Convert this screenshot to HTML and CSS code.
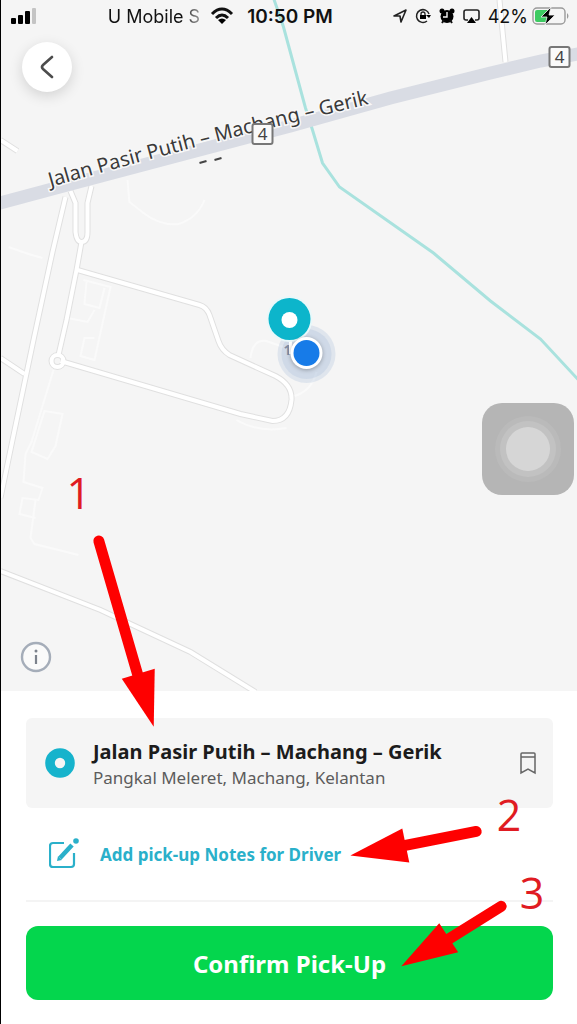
FILE: index.html
```html
<!DOCTYPE html>
<html lang="en">
<head>
  <meta charset="UTF-8" />
  <meta name="viewport" content="width=device-width, initial-scale=1.0"/>
  <title>Confirm Pick-Up</title>
  <link rel="stylesheet" href="styles.css">
</head>
<body>
  <div class="app">
    <main class="map">
      <svg class="map-canvas" viewBox="0 0 577 691" preserveAspectRatio="xMidYMid slice" aria-hidden="true">
        <!-- footpaths and building outlines -->
        <g class="faint">
          <path d="M127 180 L129 202 L143 213 Q160 226 178 224 Q197 218 204 200"/>
          <path d="M8 247 L28 254 L42 258"/>
          <path d="M53 370 L31 442 L25 454 L23 482 L42 488 L38 500 L22 498 L19 514 L35 518"/>
          <path d="M44 411 L62 414 L55 446 L47 459 L31 452 Z"/>
          <path d="M35 500 L30 538 L34 544 L78 555"/>
          <path d="M83 280 L110 287 L94 360 L80 356 L84 338 L94 338"/>
          <path d="M86 282 L84 304 L99 308 L104 288 M67 318 L87 322 L94 310"/>
          <path d="M250 358 Q252 339 266 341 L291 350 M236 420 Q258 433 286 428 M294 396 Q311 391 316 372"/>
        </g>

        <!-- small roads: grey casing first, white fill on top -->
        <g class="casing">
          <path d="M65 197 L52 252 L33 340 L12 440 L0 498"/>
          <path d="M70 191 L75 203 L75 232 Q76 242 81 242 Q87 242 87 232 L87 203 L91 186"/>
          <path d="M81 242 L76 270 L66 320 L58 355"/>
          <path d="M77 270 L199 305 Q206 307 209 315 L218 341 Q221 350 229 355 L275 376 Q292 385 291 400 Q289 421 272 421 L240 414 L60 361"/>
          <path d="M0 358 L24 374 M0 140 L17 151 M499 0 L505 62"/>
          <path d="M0 571 L100 610 L190 652 L255 692"/>
          <circle cx="57" cy="361" r="6"/>
        </g>
        <g class="lane">
          <path d="M65 197 L52 252 L33 340 L12 440 L0 498"/>
          <path d="M70 191 L75 203 L75 232 Q76 242 81 242 Q87 242 87 232 L87 203 L91 186"/>
          <path d="M81 242 L76 270 L66 320 L58 355"/>
          <path d="M77 270 L199 305 Q206 307 209 315 L218 341 Q221 350 229 355 L275 376 Q292 385 291 400 Q289 421 272 421 L240 414 L60 361"/>
          <path d="M0 358 L24 374 M0 140 L17 151 M499 0 L505 62"/>
          <path d="M0 571 L100 610 L190 652 L255 692"/>
          <circle cx="57" cy="361" r="6"/>
        </g>

        <!-- river -->
        <path class="river" d="M273 -2 L283 27 L305 108 L312 130 L322 163 L339 187 L433 253 L490 301 L540 339 L578 380"/>

        <!-- highway -->
        <path class="highway" d="M-4 204 L63 186 L180 155 L290 126 L390 98 L490 73 L540 61 L582 53"/>
        <path id="roadLine" d="M50 187 Q210 141 390 99" fill="none"/>
        <text class="road-name"><textPath href="#roadLine">Jalan Pasir Putih – Machang – Gerik</textPath></text>
        <path class="dash" d="M199 163 L206 161 M214 160 L221 158"/>
        <g class="shield">
          <rect x="252" y="124" width="20" height="20" rx="2"/>
          <text x="262" y="140">4</text>
          <rect x="549" y="47" width="20" height="20" rx="2"/>
          <text x="559" y="63">4</text>
        </g>

        <!-- pick-up pin and current location -->
        <circle class="accuracy" cx="306" cy="354" r="29"/>
        <circle class="accuracy" cx="306" cy="354" r="25"/>
        <text class="pin-label" x="283" y="355">1</text>
        <path d="M290 340 V354" stroke="#ffffff" stroke-width="3"/>
        <circle cx="289" cy="319" r="23" fill="#e9f8fa"/>
        <circle cx="289" cy="319" r="21" fill="#0cb5cb"/>
        <circle cx="289" cy="320" r="8" fill="#ffffff"/>
        <circle class="me" cx="306" cy="353" r="16"/>
        <circle cx="306" cy="353" r="13" fill="#177be8"/>
      </svg>

      <header class="status-bar">
        <div class="status-left">
          <svg width="26" height="16" viewBox="0 0 26 16" aria-hidden="true">
            <rect x="0" y="10" width="5" height="6" rx="1"/>
            <rect x="7" y="7" width="5" height="9" rx="1"/>
            <rect x="14" y="3" width="5" height="13" rx="1"/>
            <rect x="21" y="0" width="4" height="16" rx="1" fill="#c4c4c4"/>
          </svg>
          <span class="carrier">U Mobile S</span>
          <svg width="24" height="18" viewBox="0 0 24 18" aria-hidden="true">
            <g fill="none" stroke="#111111" stroke-width="3">
              <path d="M2 7 Q12 -3 22 7"/>
              <path d="M6 11 Q12 5 18 11"/>
            </g>
            <path d="M8 13 Q12 10 16 13 L12 17 Z"/>
          </svg>
        </div>
        <span class="time">10:50 PM</span>
        <div class="status-right">
          <svg width="14" height="14" viewBox="0 0 14 14" aria-hidden="true">
            <path d="M1 7 L13 1 L8 13 L7 7 Z" fill="none" stroke="#222222" stroke-width="1.6" stroke-linejoin="round"/>
          </svg>
          <svg width="16" height="16" viewBox="0 0 16 16" aria-hidden="true">
            <path d="M14 6 A6.4 6.4 0 1 0 12 13" fill="none" stroke="#222222" stroke-width="1.5"/>
            <path d="M11 7 H16 L14 10 Z"/>
            <rect x="5" y="7" width="6" height="4"/>
            <path d="M6 7 V6 A2 2 0 0 1 10 6 V7" fill="none" stroke="#222222" stroke-width="1.3"/>
          </svg>
          <svg width="16" height="16" viewBox="0 0 16 16" aria-hidden="true">
            <circle cx="8" cy="8.500" r="6.500"/>
            <circle cx="3" cy="3" r="2.500"/>
            <circle cx="13" cy="3" r="2.500"/>
            <path d="M3 15 L5 12 M13 15 L11 12" stroke="#111111" stroke-width="2"/>
            <path d="M8 4 V9 H4" fill="none" stroke="#f5f5f5" stroke-width="1.4"/>
          </svg>
          <svg width="17" height="15" viewBox="0 0 17 15" aria-hidden="true">
            <path d="M5 11 H3 Q1 11 1 9 V3 Q1 1 3 1 H14 Q16 1 16 3 V9 Q16 11 14 11 H12" fill="none" stroke="#222222" stroke-width="1.6"/>
            <path d="M8.500 8 L13 14 H4 Z"/>
          </svg>
          <div class="battery">
            <span>42%</span>
            <svg width="37" height="18" viewBox="0 0 37 18" aria-hidden="true">
              <rect x="1" y="1" width="32" height="16" rx="4" fill="#f5f5f5" stroke="#9a9a9a" stroke-width="1.4"/>
              <path d="M5 3 H16 V15 H5 Q3 15 3 13 V5 Q3 3 5 3 Z" fill="#3dcb62"/>
              <path d="M35 6 Q38 9 35 12 Z" fill="#9a9a9a"/>
              <path d="M19 0 L9 10 H15 L13 18 L23 8 H17 Z" stroke="#f5f5f5" stroke-width="0.800"/>
            </svg>
          </div>
        </div>
      </header>

      <button class="back" type="button" aria-label="Back">
        <svg width="14" height="24" viewBox="0 0 14 24" aria-hidden="true">
          <path d="M12 2 L3 10 Q1 12 3 14 L12 22" fill="none" stroke="#4c4c4c" stroke-width="2.600" stroke-linecap="round"/>
        </svg>
      </button>

      <button class="assistive" type="button" aria-label="AssistiveTouch"><span></span></button>

      <button class="info" type="button" aria-label="Map information">
        <svg width="32" height="32" viewBox="0 0 32 32" aria-hidden="true">
          <circle cx="16" cy="16" r="14" fill="#fafafa" stroke="#a5adb9" stroke-width="2.400"/>
          <path d="M16 14 V23" stroke="#7c828c" stroke-width="2.200"/>
          <circle cx="16" cy="10" r="1.500" fill="#7c828c"/>
        </svg>
      </button>
    </main>

    <section class="sheet">
      <div class="place">
        <svg width="30" height="30" viewBox="0 0 30 30" aria-hidden="true">
          <circle cx="15" cy="15" r="10" fill="none" stroke="#16b3cc" stroke-width="9.600"/>
        </svg>
        <div class="place-text">
          <h1>Jalan Pasir Putih – Machang – Gerik</h1>
          <p>Pangkal Meleret, Machang, Kelantan</p>
        </div>
        <button class="save" type="button" aria-label="Save place">
          <svg width="18" height="24" viewBox="0 0 18 24" aria-hidden="true">
            <path d="M2 3 Q2 2 3 2 H15 Q16 2 16 3 V22 L9 18 L2 22 Z M2 6 H16" fill="none" stroke="#666666" stroke-width="1.500"/>
          </svg>
        </button>
      </div>

      <a class="notes" href="#notes">
        <svg width="30" height="32" viewBox="0 0 30 32" aria-hidden="true">
          <path d="M15 5 H4 Q1 5 1 8 V26 Q1 29 4 29 H22 Q25 29 25 26 V15" fill="none" stroke="#2ab0ca" stroke-width="2.200"/>
          <path d="M11 20 L23 7" stroke="#2ab0ca" stroke-width="4.600"/>
          <path d="M8 23 L9 18 L13 22 Z" fill="#2ab0ca"/>
          <circle cx="27" cy="3" r="2.800" fill="#2ab0ca"/>
        </svg>
        <span>Add pick-up Notes for Driver</span>
      </a>

      <button class="confirm" type="button">Confirm Pick-Up</button>
    </section>

    <!-- numbered steps drawn over the screen -->
    <svg class="steps" viewBox="0 0 577 1024" aria-hidden="true">
      <g class="shaft">
        <path d="M98 541 L139 682"/>
        <path d="M476 832 L400 847"/>
        <path d="M501 907 L445 942"/>
      </g>
      <g class="head">
        <path d="M121 679 L154 669 L153 727 Z"/>
        <path d="M402 829 L409 863 L350 856 Z"/>
        <path d="M439 924 L458 953 L401 967 Z"/>
      </g>
      <text x="78" y="509">1</text>
      <text x="509" y="832">2</text>
      <text x="532" y="910">3</text>
    </svg>
  </div>
</body>
</html>
```

FILE: styles.css
```css
*,
*::before,
*::after {
  margin: 0;
  padding: 0;
  box-sizing: border-box;
}

body {
  font-family: "Noto Sans", "Open Sans", sans-serif;
  background-color: #ffffff;
  color: #1c1c1c;
}

button {
  border: none;
  font-family: inherit;
  cursor: pointer;
}

svg {
  display: block;
  flex: none;
}

.app {
  position: relative;
  display: flex;
  flex-direction: column;
  min-height: 100vh;
  border-left: 1px solid #000000;
}

/* map */
.map {
  position: relative;
  flex: 1;
  display: flex;
  flex-direction: column;
  align-items: flex-start;
  min-height: 520px;
  padding-bottom: 18px;
  background-color: #f5f5f5;
  overflow: hidden;
}

.map-canvas {
  position: absolute;
  inset: 0;
  width: 100%;
  height: 100%;
}

.faint {
  fill: none;
  stroke: #fafafa;
  stroke-width: 2;
}

.casing {
  fill: none;
  stroke: #e0e0e0;
  stroke-width: 6;
}

.lane {
  fill: none;
  stroke: #ffffff;
  stroke-width: 4;
}

.river {
  fill: none;
  stroke: #a9e2de;
  stroke-width: 3;
}

.highway {
  fill: none;
  stroke: #d9dce4;
  stroke-width: 13;
}

.road-name {
  font-size: 20px;
  fill: #3a3a3a;
  stroke: #f8f8f8;
  stroke-width: 3px;
  paint-order: stroke;
}

.dash {
  stroke: #444444;
  stroke-width: 2;
}

.shield rect {
  fill: #fafafa;
  stroke: #777777;
  stroke-width: 2;
}

.shield text {
  font-size: 17px;
  text-anchor: middle;
  fill: #444444;
}

.accuracy {
  fill: #9fb8d8;
  fill-opacity: 0.25;
}

.pin-label {
  font-size: 14px;
  font-weight: bold;
  fill: #7f8ca3;
}

.me {
  fill: #ffffff;
  filter: drop-shadow(0 1px 2px rgba(0, 0, 0, 0.3));
}

/* status bar */
.status-bar {
  position: relative;
  display: grid;
  grid-template-columns: 1fr auto 1fr;
  align-items: center;
  gap: 13px;
  width: 100%;
  height: 32px;
  padding: 0 8px 0 10px;
  font-family: Inter, "Liberation Sans", sans-serif;
  font-size: 18px;
  color: #111111;
}

.status-left,
.status-right {
  display: flex;
  align-items: center;
}

.status-left {
  gap: 10px;
}

.carrier {
  margin-left: auto;
  white-space: nowrap;
  background: linear-gradient(to right, #111111 80%, #999999);
  background-clip: text;
  color: transparent;
}

.time {
  font-size: 19px;
  font-weight: 600;
}

.status-right {
  justify-content: flex-end;
  gap: 8px;
}

.battery {
  display: flex;
  align-items: center;
  gap: 4px;
}

/* map buttons */
.back {
  position: relative;
  display: flex;
  align-items: center;
  justify-content: center;
  width: 50px;
  height: 50px;
  margin: 10px 0 0 21px;
  border-radius: 50%;
  background-color: #ffffff;
  box-shadow: 0 4px 14px rgba(0, 0, 0, 0.14);
}

.assistive {
  position: absolute;
  top: 403px;
  right: 3px;
  display: flex;
  align-items: center;
  justify-content: center;
  width: 92px;
  height: 92px;
  border-radius: 20px;
  background-color: #b5b5b5;
}

.assistive span {
  width: 44px;
  height: 44px;
  border-radius: 50%;
  background-color: #d6d6d6;
  box-shadow: 0 0 0 6px #c2c2c2, 0 0 0 11px #bababa;
}

.info {
  position: relative;
  margin: auto 0 0 19px;
  background: none;
}

/* bottom sheet */
.sheet {
  padding: 27px 24px 24px 25px;
  background-color: #ffffff;
}

.place {
  display: flex;
  align-items: center;
  min-height: 90px;
  padding: 0 14px 0 19px;
  border-radius: 6px;
  background-color: #f5f5f5;
}

.place-text {
  flex: 1;
  margin-left: 18px;
  padding-top: 2px;
}

.place h1 {
  font-size: 20px;
  font-weight: bold;
  line-height: 28px;
}

.place p {
  font-size: 17px;
  line-height: 24px;
  color: #5c5c5c;
}

.save {
  padding: 2px;
  background: none;
}

.notes {
  display: flex;
  align-items: center;
  gap: 21px;
  height: 94px;
  padding-left: 23px;
  border-bottom: 2px solid #f4f4f4;
  font-size: 17px;
  font-weight: bold;
  color: #2ab0ca;
  text-decoration: none;
}

.confirm {
  width: 100%;
  height: 74px;
  margin-top: 24px;
  border-radius: 12px;
  background-color: #04d64d;
  color: #ffffff;
  font-size: 24px;
  font-weight: bold;
}

/* step arrows */
.steps {
  position: absolute;
  inset: 0;
  width: 100%;
  height: 100%;
  pointer-events: none;
}

.shaft {
  stroke: #fe0000;
  stroke-width: 11;
  stroke-linecap: round;
}

.head {
  fill: #fe0000;
}

.steps text {
  font-family: "Open Sans", "Noto Sans", sans-serif;
  font-size: 43px;
  text-anchor: middle;
  fill: #e01b22;
}
```
